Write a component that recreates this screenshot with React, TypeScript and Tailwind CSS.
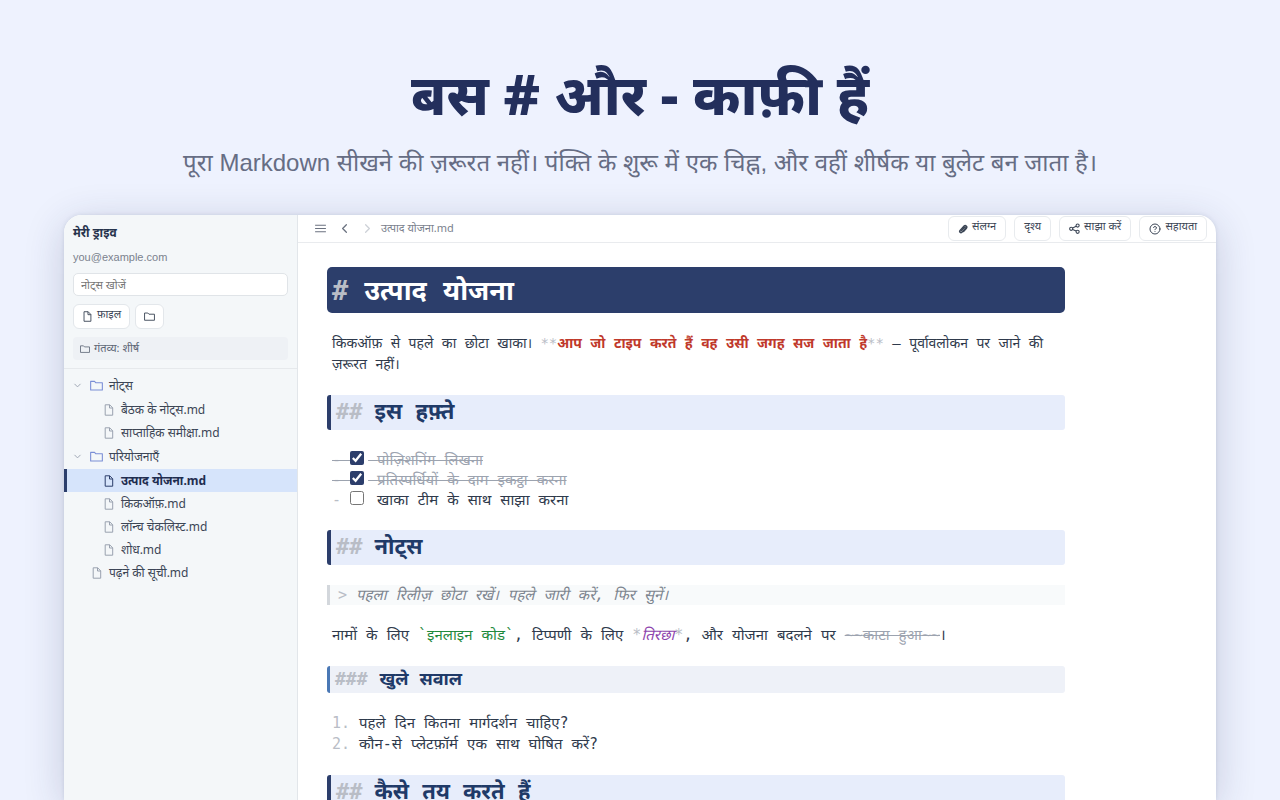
import type { ReactNode } from "react";
import { ChevronDown, ChevronLeft, ChevronRight, CircleHelp } from "lucide-react";

interface TreeItem {
  name: string;
  kind: "folder" | "file";
  nested?: boolean;
  active?: boolean;
}

const tree: TreeItem[] = [
  { name: "नोट्स", kind: "folder" },
  { name: "बैठक के नोट्स.md", kind: "file", nested: true },
  { name: "साप्ताहिक समीक्षा.md", kind: "file", nested: true },
  { name: "परियोजनाएँ", kind: "folder" },
  { name: "उत्पाद योजना.md", kind: "file", nested: true, active: true },
  { name: "किकऑफ़.md", kind: "file", nested: true },
  { name: "लॉन्च चेकलिस्ट.md", kind: "file", nested: true },
  { name: "शोध.md", kind: "file", nested: true },
  { name: "पढ़ने की सूची.md", kind: "file" },
];

const tasks = [
  { text: "पोज़िशनिंग लिखना", done: true },
  { text: "प्रतिस्पर्धियों के दाम इकट्ठा करना", done: true },
  { text: "खाका टीम के साथ साझा करना", done: false },
];

const questions = [
  "पहले दिन कितना मार्गदर्शन चाहिए?",
  "कौन-से प्लेटफ़ॉर्म एक साथ घोषित करें?",
];

interface IconProps {
  className?: string;
}

function FileIcon({ className }: IconProps) {
  return (
    <svg
      viewBox="0 0 12 12"
      fill="none"
      stroke="currentColor"
      strokeLinejoin="round"
      className={className}
    >
      <path d="M2.2 .8h4.5l3 3v7.4H2.2z" />
      <path d="M6.5 .8v3.2h3.2" />
    </svg>
  );
}

function FolderIcon({ className }: IconProps) {
  return (
    <svg
      viewBox="0 0 12 12"
      fill="none"
      stroke="currentColor"
      strokeLinejoin="round"
      className={className}
    >
      <path d="M.6 2.2h3.6l1.2 1.3h6v6.6H.6z" />
    </svg>
  );
}

function MenuIcon({ className }: IconProps) {
  return (
    <svg viewBox="0 0 12 12" stroke="currentColor" className={className}>
      <path d="M1 3h10M1 6h10M1 9h10" />
    </svg>
  );
}

function ClipIcon({ className }: IconProps) {
  return (
    <svg
      viewBox="0 0 12 12"
      fill="none"
      stroke="currentColor"
      strokeWidth="1.5"
      strokeLinecap="round"
      className={className}
    >
      <path d="M3.6 8.6 8 3.9c.9-.9 2.1.2 1.3 1.1L4.8 9.9C3.2 11.4.9 9.4 2.4 7.6l4.8-5.2C9 .7 11.8 3 10.2 5.1L6.7 9" />
    </svg>
  );
}

function ShareIcon({ className }: IconProps) {
  return (
    <svg
      viewBox="0 0 12 12"
      fill="none"
      stroke="currentColor"
      strokeWidth="1.2"
      className={className}
    >
      <circle cx="2.4" cy="6.3" r="1.7" />
      <circle cx="9.4" cy="2.8" r="1.7" />
      <circle cx="9.4" cy="9.6" r="1.7" />
      <path d="m4 5.5 3.8-1.9M4 7.1l3.8 1.7" />
    </svg>
  );
}

function Mark({ children }: { children: ReactNode }) {
  return <span className="text-[#b9bdc6]">{children}</span>;
}

function TreeRow({ name, kind, nested, active }: TreeItem) {
  if (kind === "folder") {
    return (
      <li>
        <button className="flex h-[25px] w-full items-center pl-2 text-left">
          <ChevronDown className="size-[11px] text-gray-400" />
          <FolderIcon className="ml-[7px] size-[13px] text-[#7b8fd6]" />
          <span className="ml-1.5">{name}</span>
        </button>
      </li>
    );
  }

  return (
    <li>
      <button
        className={`flex h-[23px] w-full items-center border-l-3 text-left ${
          nested ? "pl-9" : "pl-6"
        } ${
          active
            ? "border-[#2c3e6b] bg-[#d6e4fb] font-bold text-[#1f2d50]"
            : "border-transparent"
        }`}
      >
        <FileIcon
          className={`size-3 ${active ? "text-[#2c3e6b]" : "text-gray-400"}`}
        />
        <span className="ml-1.5">{name}</span>
      </button>
    </li>
  );
}

function Sidebar() {
  return (
    <aside className="w-[234px] shrink-0 border-r border-[#e2e6ea] bg-[#f4f7f9] text-xs text-[#3c4656]">
      <div className="border-b border-[#e6e9ec] px-[9px] pt-2 pb-2">
        <h2 className="text-xs leading-5 font-bold text-[#27344d]">
          मेरी ड्राइव
        </h2>
        <p className="mt-1 font-['Liberation_Sans',sans-serif] text-[11px] leading-5 text-[#7b828e]">
          you@example.com
        </p>
        <input
          type="search"
          aria-label="नोट्स खोजें"
          placeholder="नोट्स खोजें"
          className="mt-1.5 block h-[23px] w-full rounded-[5px] border border-[#e0e4e8] bg-white px-[7px] text-[11px] placeholder:text-[#777]"
        />
        <div className="mt-2 flex gap-[5px]">
          <button className="flex h-[25px] items-center gap-1 rounded-md border border-[#e3e7eb] bg-white px-2 text-[11px]">
            <FileIcon className="size-[11px]" />
            <span className="pb-1">फ़ाइल</span>
          </button>
          <button
            aria-label="फ़ोल्डर"
            className="flex h-[25px] items-center rounded-md border border-[#e3e7eb] bg-white px-2"
          >
            <FolderIcon className="size-[11px]" />
          </button>
        </div>
        <p className="mt-2 flex h-[23px] items-center gap-1 rounded bg-[#eef1f5] px-[7px] text-[11px] text-[#5f6877]">
          <FolderIcon className="size-[10px]" />
          गंतव्य: शीर्ष
        </p>
      </div>
      <ul className="pt-1">
        {tree.map((item) => (
          <TreeRow key={item.name} {...item} />
        ))}
      </ul>
    </aside>
  );
}

function ToolbarButton({
  icon,
  children,
}: {
  icon?: ReactNode;
  children: ReactNode;
}) {
  return (
    <button className="flex h-[25px] items-center gap-1 rounded-md border border-[#e8ebee] bg-white px-[9px] text-[11px] text-[#3c4656]">
      {icon}
      <span className="pb-1">{children}</span>
    </button>
  );
}

function Toolbar() {
  return (
    <header className="flex h-7 shrink-0 items-center border-b border-[#e9ebee] pr-[9px] pl-4">
      <button aria-label="मेनू" className="text-[#6b7280]">
        <MenuIcon className="size-[13px]" />
      </button>
      <button aria-label="पीछे" className="ml-2.5 text-[#6b7280]">
        <ChevronLeft className="size-[15px]" />
      </button>
      <button aria-label="आगे" className="ml-2 text-[#cdd1d7]">
        <ChevronRight className="size-[15px]" />
      </button>
      <span className="ml-1.5 text-[11px] text-[#7b828e]">उत्पाद योजना.md</span>
      <div className="ml-auto flex gap-2">
        <ToolbarButton icon={<ClipIcon className="size-[10px]" />}>
          संलग्न
        </ToolbarButton>
        <ToolbarButton>दृश्य</ToolbarButton>
        <ToolbarButton icon={<ShareIcon className="size-[11px]" />}>
          साझा करें
        </ToolbarButton>
        <ToolbarButton icon={<CircleHelp className="size-3" />}>
          सहायता
        </ToolbarButton>
      </div>
    </header>
  );
}

function SectionHeading({ children }: { children: ReactNode }) {
  return (
    <h3 className="flex h-[35px] items-center gap-3 rounded-[3px] border-l-4 border-[#2c3e6b] bg-[#e7edfb] pb-0.5 pl-[5px] text-[22px] font-bold text-[#1f3a68]">
      <Mark>##</Mark>
      {children}
    </h3>
  );
}

function Editor() {
  return (
    <article className="ml-[29px] flex w-full max-w-[738px] flex-col gap-5 pt-6 font-['DejaVu_Sans_Mono','Noto_Sans_Devanagari','Noto_Sans',monospace] text-[15px] leading-[21px] text-[#2f3a4c]">
      <h2 className="flex h-[46px] items-center gap-4 rounded-[5px] bg-[#2c3e6b] px-[5px] text-[27px] font-bold text-white">
        <Mark>#</Mark>
        उत्पाद योजना
      </h2>
      <p className="px-[5px] text-[14px]">
        किकऑफ़ से पहले का छोटा खाका। <Mark>**</Mark>
        <strong className="text-[#c0392b]">
          आप जो टाइप करते हैं वह उसी जगह सज जाता है
        </strong>
        <Mark>**</Mark> — पूर्वावलोकन पर जाने की ज़रूरत नहीं।
      </p>
      <SectionHeading>इस हफ़्ते</SectionHeading>
      <ul className="px-[5px] leading-5">
        {tasks.map((task) => (
          <li key={task.text} className="h-5">
            <label
              className={
                task.done ? "text-[#9ca3af] line-through" : undefined
              }
            >
              <Mark>- </Mark>
              <input
                type="checkbox"
                defaultChecked={task.done}
                className="mr-1 size-[14px] align-baseline accent-[#2c3e6b]"
              />{" "}
              {task.text}
            </label>
          </li>
        ))}
      </ul>
      <SectionHeading>नोट्स</SectionHeading>
      <blockquote className="h-5 border-l-3 border-[#d3d7dc] bg-[#f8fafb] pl-2 leading-5 text-[#7d858f] italic">
        <Mark>&gt;</Mark> पहला रिलीज़ छोटा रखें। पहले जारी करें, फिर सुनें।
      </blockquote>
      <p className="px-[5px]">
        नामों के लिए{" "}
        <code className="font-[inherit] text-[15px] text-[#1e8a3c]">
          `इनलाइन कोड`
        </code>
        , टिप्पणी के लिए <Mark>*</Mark>
        <em className="text-[#8e44ad]">तिरछा</em>
        <Mark>*</Mark>, और योजना बदलने पर{" "}
        <del className="text-[#9ca3af]">
          <Mark>~~</Mark>काटा हुआ<Mark>~~</Mark>
        </del>
        ।
      </p>
      <h4 className="flex h-[27px] items-center gap-3 rounded-[3px] border-l-3 border-[#4a78b5] bg-[#eef1f8] pb-0.5 pl-[5px] text-lg font-bold text-[#1f3a68]">
        <Mark>###</Mark>
        खुले सवाल
      </h4>
      <ol className="px-[5px]">
        {questions.map((question, index) => (
          <li key={question}>
            <Mark>{index + 1}.</Mark> {question}
          </li>
        ))}
      </ol>
      <SectionHeading>कैसे तय करते हैं</SectionHeading>
    </article>
  );
}

export default function App() {
  return (
    <main className="flex h-screen flex-col overflow-hidden bg-[#eef2fe] px-16 font-['Noto_Sans','Noto_Sans_Devanagari',sans-serif]">
      <div className="shrink-0 pt-[53px] text-center">
        <h1 className="text-[56px] leading-20 font-extrabold text-[#232f5c]">
          बस # और - काफ़ी हैं
        </h1>
        <p className="mt-3 font-['Liberation_Sans','Noto_Sans_Devanagari',sans-serif] text-2xl leading-9 text-[#666d84]">
          पूरा Markdown सीखने की ज़रूरत नहीं। पंक्ति के शुरू में एक चिह्न, और वहीं
          शीर्षक या बुलेट बन जाता है।
        </p>
      </div>
      <div className="mt-[34px] flex min-h-0 flex-1 overflow-hidden rounded-t-[18px] bg-white shadow-[0_8px_40px_rgba(35,47,92,0.2),0_0_4px_rgba(35,47,92,0.12)]">
        <Sidebar />
        <div className="flex min-w-0 flex-1 flex-col">
          <Toolbar />
          <Editor />
        </div>
      </div>
    </main>
  );
}
